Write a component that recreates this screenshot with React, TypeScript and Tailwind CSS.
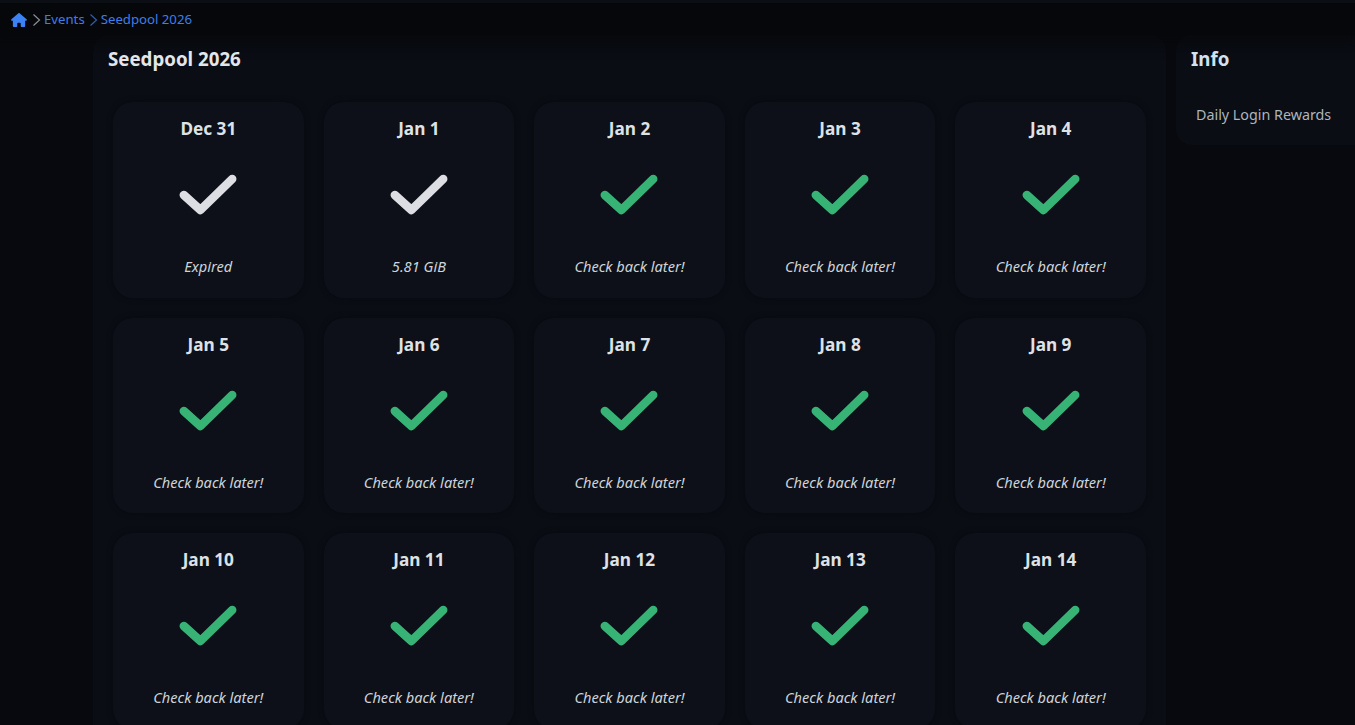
const days = [
  ["Dec 31", "Expired", "w"], ["Jan 1", "5.81 GiB", "w"], ["Jan 2"], ["Jan 3"], ["Jan 4"],
  ["Jan 5"], ["Jan 6"], ["Jan 7"], ["Jan 8"], ["Jan 9"],
  ["Jan 10"], ["Jan 11"], ["Jan 12"], ["Jan 13"], ["Jan 14"],
];

function Check({ white }: { white: boolean }) {
  return (
    <svg width="58" height="42" viewBox="0 0 58 42" fill="none" className="block">
      <path d="M4.8 21 L21.4 36 L53.2 5" stroke={white ? "#dcdee3" : "#37b376"} strokeWidth="8.5" strokeLinecap="round" strokeLinejoin="round" />
    </svg>
  );
}

function Chevron({ color }: { color: string }) {
  return (
    <svg width="9" height="14" viewBox="0 0 9 14" fill="none" className="block">
      <path d="M1.5 1.5 L7.5 7 L1.5 12.500" stroke={color} strokeWidth="1.200" />
    </svg>
  );
}

export default function App() {
  return (
    <div className="h-[725px] w-[1355px] overflow-hidden bg-[#08090e] font-['Noto_Sans','Open_Sans',sans-serif] flex flex-col">
      <div className="h-[3px] bg-[#0b0e14] shrink-0 relative z-20" />
      <nav className="relative z-10 h-[32px] shrink-0 flex items-center pl-[11px] pt-px text-[13.2px] text-[#3d7ee8] bg-[#06070b] shadow-[0_3px_14px_6px_rgba(6,7,11,0.8)]">
        <svg width="16" height="14" viewBox="0 0 576 512" fill="#3b82f6" className="block">
          <path d="M575.8 255.5c0 18-15 32.100-32 32.100h-32l.7 160.200c0 2.700-.2 5.400-.5 8.100V472c0 22.100-17.900 40-40 40H456c-1.100 0-2.200 0-3.300-.1-1.400 .1-2.800 .1-4.200 .1H416 392c-22.100 0-40-17.900-40-40V448 384c0-17.700-14.300-32-32-32H256c-17.700 0-32 14.300-32 32v64 24c0 22.100-17.900 40-40 40H160 128.100c-1.500 0-3-.1-4.500-.2-1.200 .1-2.400 .2-3.600 .2H104c-22.100 0-40-17.900-40-40V360c0-.9 0-1.900 .1-2.800V287.600H32c-18 0-32-14-32-32.100 0-9 3-17 10-24L266.400 8c7-7 15-8 22-8s15 2 21 7L564.800 231.500c8 7 12 15 11 24z" />
        </svg>
        <span className="ml-[5px]"><Chevron color="#8b8f96" /></span>
        <span className="ml-[3px]">Events</span>
        <span className="ml-[4px]"><Chevron color="#2f5fa8" /></span>
        <span className="ml-[3px]">Seedpool 2026</span>
      </nav>
      <div className="flex-1 flex items-start pl-[93px] min-h-0">
        <main className="w-[1073px] shrink-0 rounded-t-[16px] bg-[#0a0d14] pt-[11.500px] px-5">
          <h1 className="relative z-20 -ml-[5px] text-[18.7px] leading-[24px] font-bold text-[#e3e6ea]">Seedpool 2026</h1>
          <div className="mt-[31.500px] grid grid-cols-5 gap-5">
            {days.map(([d, s, w]) => (
              <div key={d} className="h-[195.500px] rounded-[20px] bg-[#0d1018] shadow-[0_0_6px_rgba(0,0,0,0.35)] flex flex-col items-center pt-[15px]">
                <div className="text-[17.2px] leading-[23px] font-bold text-[#dee2e6]">{d}</div>
                <div className="mt-[34px]"><Check white={!!w} /></div>
                <div className="mt-[41px] text-[14.6px] leading-[19px] italic text-[#ced4da]">{s ?? "Check back later!"}</div>
              </div>
            ))}
          </div>
        </main>
        <aside className="ml-[10px] flex-1 h-[110px] rounded-l-[16px] bg-[#0a0d14] pt-[11.500px] pl-[15px]">
          <h2 className="relative z-20 text-[18.7px] leading-[24px] font-bold text-[#d3e2f2]">Info</h2>
          <div className="mt-[34.500px] pl-[5px] text-[14.3px] leading-[19px] text-[#adb5bd]">Daily Login Rewards</div>
        </aside>
      </div>
    </div>
  );
}
